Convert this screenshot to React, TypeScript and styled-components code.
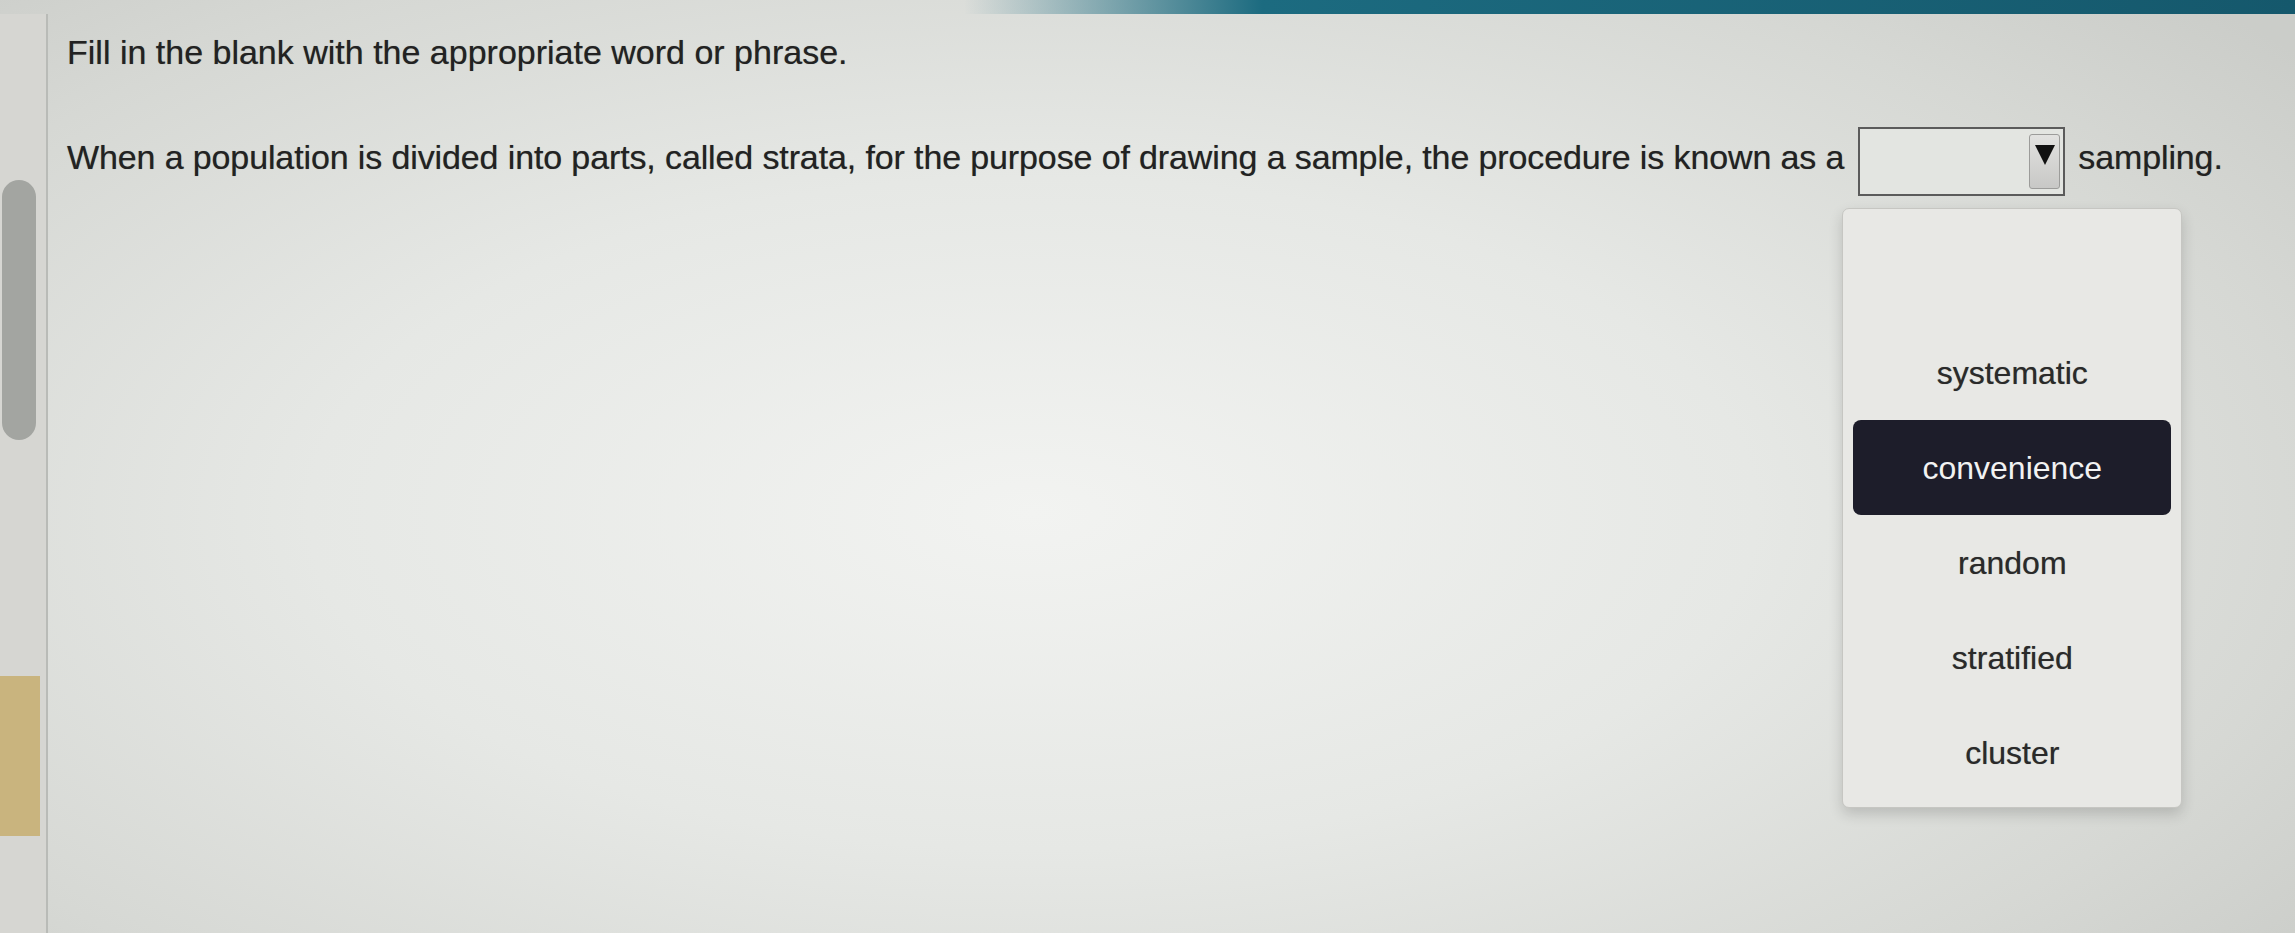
import React from "react";
import styled, { createGlobalStyle } from "styled-components";

const GlobalStyle = createGlobalStyle`
  html, body {
    margin: 0;
    padding: 0;
    height: 100%;
  }
  body {
    font-family: "Liberation Sans", Arial, sans-serif;
    color: #2a2a2a;
    overflow: hidden;
  }
  #root {
    height: 100%;
  }
`;

const OPTIONS = ["", "systematic", "convenience", "random", "stratified", "cluster"];

const Page = styled.div`
  width: 2295px;
  height: 933px;
  display: flex;
  flex-direction: column;
  background: radial-gradient(
    ellipse 70% 80% at 45% 55%,
    #f2f3f1 0%,
    #e6e8e5 45%,
    #d6d8d4 80%,
    #cbcdc9 100%
  );
`;

const TopBar = styled.div`
  height: 14px;
  flex-shrink: 0;
  background: linear-gradient(
    90deg,
    rgba(26, 100, 120, 0) 0%,
    rgba(26, 100, 120, 0) 42%,
    #1c6b80 55%,
    #15586c 100%
  );
`;

const Body = styled.div`
  flex: 1;
  display: flex;
`;

const Gutter = styled.div`
  width: 46px;
  flex-shrink: 0;
  display: flex;
  flex-direction: column;
  border-right: 2px solid #b9bbb7;
  background: #d6d6d2;
`;

const ScrollThumb = styled.div`
  margin: 166px 0 0 2px;
  width: 34px;
  height: 260px;
  border-radius: 17px;
  background: #a3a5a1;
`;

const Marker = styled.div`
  margin-top: 236px;
  width: 40px;
  height: 160px;
  background: #c9b47e;
`;

const Content = styled.div`
  flex: 1;
  padding: 18px 0 0 19px;
`;

const Title = styled.p`
  margin: 0;
  font-size: 34px;
  line-height: 40px;
  color: #222;
  text-shadow: 0 0 0.7px rgba(0, 0, 0, 0.45);
`;

const Sentence = styled.div`
  margin-top: 45px;
  display: flex;
  align-items: center;
  font-size: 34px;
  line-height: 40px;
  letter-spacing: -0.12px;
  color: #222;
  text-shadow: 0 0 0.7px rgba(0, 0, 0, 0.45);
  white-space: nowrap;
`;

const SelectWrap = styled.div`
  position: relative;
  margin: 10px 13px 0 14px;
`;

const SelectBox = styled.div`
  display: flex;
  justify-content: flex-end;
  align-items: center;
  box-sizing: border-box;
  width: 207px;
  height: 69px;
  padding-right: 3px;
  border: 2px solid #5b5b5b;
  background: #e3e5e1;
`;

const ArrowButton = styled.div`
  display: flex;
  justify-content: center;
  padding-top: 9px;
  box-sizing: border-box;
  width: 31px;
  height: 55px;
  border: 1px solid #9c9c9a;
  border-radius: 3px;
  background: linear-gradient(#e2e2e0, #c8c8c6);
`;

const Menu = styled.ul`
  position: absolute;
  top: 81px;
  left: -16px;
  width: 340px;
  height: 600px;
  box-sizing: border-box;
  margin: 0;
  padding: 21px 10px 9px;
  list-style: none;
  background: #e8e8e5;
  border: 1px solid #c6c6c2;
  border-radius: 7px;
  box-shadow: 0 6px 14px rgba(0, 0, 0, 0.16);
  letter-spacing: 0;
`;

const Option = styled.li<{ $active?: boolean }>`
  height: 95px;
  display: flex;
  align-items: center;
  justify-content: center;
  border-radius: 8px;
  font-size: 32px;
  color: ${({ $active }) => ($active ? "#f2f2f2" : "#2a2a2a")};
  background: ${({ $active }) => ($active ? "#1d1d2a" : "transparent")};
  text-shadow: ${({ $active }) => ($active ? "none" : "0 0 0.7px rgba(0, 0, 0, 0.45)")};
`;

const Arrow = () => (
  <svg width="22" height="22" viewBox="0 0 22 22">
    <path d="M1 1 H21 L11 21 Z" fill="#111" />
  </svg>
);

export default function App() {
  return (
    <>
      <GlobalStyle />
      <Page>
        <TopBar />
        <Body>
          <Gutter>
            <ScrollThumb />
            <Marker />
          </Gutter>
          <Content>
            <Title>Fill in the blank with the appropriate word or phrase.</Title>
            <Sentence>
              <span>
                When a population is divided into parts, called strata, for the purpose of drawing
                a sample, the procedure is known as a
              </span>
              <SelectWrap>
                <SelectBox>
                  <ArrowButton>
                    <Arrow />
                  </ArrowButton>
                </SelectBox>
                <Menu>
                  {OPTIONS.map((o, i) => (
                    <Option key={i} $active={o === "convenience"}>
                      {o}
                    </Option>
                  ))}
                </Menu>
              </SelectWrap>
              <span>sampling.</span>
            </Sentence>
          </Content>
        </Body>
      </Page>
    </>
  );
}
